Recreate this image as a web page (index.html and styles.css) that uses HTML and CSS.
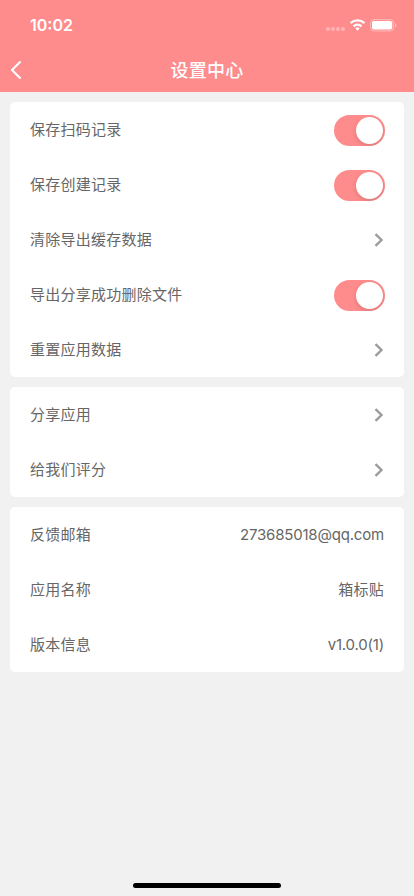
FILE: index.html
```html
<!DOCTYPE html>
<html lang="zh-CN">
<head>
<meta charset="utf-8">
<meta name="viewport" content="width=device-width, initial-scale=1">
<title>设置中心</title>
<link rel="stylesheet" href="styles.css">
</head>
<body>
<div class="screen">
  <header class="header">
    <div class="status">
      <span class="time">10:02</span>
      <svg class="indicators" width="76" height="16" viewBox="0 0 76 16" fill="#fff">
        <g opacity=".35"><circle cx="3" cy="12" r="2"/><circle cx="8" cy="12" r="2"/><circle cx="13" cy="12" r="2"/><circle cx="18" cy="12" r="2"/></g>
        <g fill="none" stroke="#fff" stroke-width="2.3"><path d="M25.6 6.1a10 10 0 0 1 13.8 0"/><path d="M28.6 9.3a5.7 5.7 0 0 1 7.8 0"/></g>
        <path d="M30.4 11.4a3 3 0 0 1 4.2 0l-2.1 2.3z"/>
        <rect x="45.6" y="2.6" width="23" height="11.4" rx="3.4" fill="none" stroke="#fff" stroke-opacity=".4"/>
        <rect x="47" y="4" width="20.2" height="8.6" rx="1.8"/>
        <path d="M70 6.4c1.9.6 1.9 3.2 0 3.8z" opacity=".45"/>
      </svg>
    </div>
    <div class="nav">
      <svg class="back" width="12" height="20" viewBox="0 0 12 20" fill="none" stroke="#fff" stroke-width="2.1" stroke-linecap="round" stroke-linejoin="round"><path d="M10 2 2 10l8 8"/></svg>
      <h1 class="title">设置中心</h1>
    </div>
  </header>
  <main class="content">
    <section class="card">
      <div class="row"><span>保存扫码记录</span><span class="switch"><i class="knob"></i></span></div>
      <div class="row"><span>保存创建记录</span><span class="switch"><i class="knob"></i></span></div>
      <div class="row"><span>清除导出缓存数据</span><svg class="chevron" viewBox="0 0 10 14"><path d="m1.5 1.2 6 5.8-6 5.8"/></svg></div>
      <div class="row"><span>导出分享成功删除文件</span><span class="switch"><i class="knob"></i></span></div>
      <div class="row"><span>重置应用数据</span><svg class="chevron" viewBox="0 0 10 14"><path d="m1.5 1.2 6 5.8-6 5.8"/></svg></div>
    </section>
    <section class="card">
      <div class="row"><span>分享应用</span><svg class="chevron" viewBox="0 0 10 14"><path d="m1.5 1.2 6 5.8-6 5.8"/></svg></div>
      <div class="row"><span>给我们评分</span><svg class="chevron" viewBox="0 0 10 14"><path d="m1.5 1.2 6 5.8-6 5.8"/></svg></div>
    </section>
    <section class="card">
      <div class="row"><span>反馈邮箱</span><span class="latin">273685018@qq.com</span></div>
      <div class="row"><span>应用名称</span><span>箱标贴</span></div>
      <div class="row"><span>版本信息</span><span class="latin">v1.0.0(1)</span></div>
    </section>
  </main>
  <div class="home-bar"></div>
</div>
</body>
</html>
```
FILE: styles.css
```css
* { box-sizing: border-box; }
body {
  margin: 0;
  background: #f1f1f1;
  color: #666;
  font: 15px/22px Inter, "Noto Sans CJK SC", sans-serif;
}
.screen {
  height: 896px;
  display: flex;
  flex-direction: column;
  overflow: hidden;
}
.header {
  height: 92px;
  background: #ff8c8c;
  color: #fff;
}
.status {
  height: 48px;
  padding: 2px 15px 0 30px;
  display: flex;
  align-items: center;
  justify-content: space-between;
}
.time {
  font-size: 16px;
  font-weight: 600;
}
.indicators { margin-right: -2px; }
.nav {
  height: 44px;
  padding: 0 10px;
  display: grid;
  grid-template-columns: 20px 1fr 20px;
  align-items: center;
}
.title {
  margin: 0;
  padding-top: 2px;
  text-align: center;
  font-size: 18px;
  font-weight: 500;
  letter-spacing: .2px;
}
.content {
  flex: 1;
  padding: 10px;
  display: flex;
  flex-direction: column;
  gap: 10px;
}
.card {
  background: #fff;
  border-radius: 5px;
}
.row {
  height: 55px;
  padding: 1px 20px 0;
  display: flex;
  align-items: center;
  justify-content: space-between;
  letter-spacing: .25px;
}
.latin { letter-spacing: -.19px; }
.switch {
  width: 51px;
  height: 31px;
  padding: 2px;
  margin-right: -1px;
  border-radius: 16px;
  background: #ff8c8c;
  display: flex;
  justify-content: flex-end;
}
.knob {
  width: 27px;
  height: 27px;
  border-radius: 50%;
  background: #fff;
  box-shadow: 0 2px 5px rgba(0, 0, 0, .15);
}
.switch { overflow: hidden; }
.chevron {
  width: 10px;
  height: 14px;
  margin-bottom: 1px;
  fill: none;
  stroke: #9c9c9c;
  stroke-width: 2.4;
}
.home-bar {
  align-self: center;
  width: 148px;
  height: 5px;
  margin-bottom: 8px;
  border-radius: 3px;
  background: #000;
}
```
